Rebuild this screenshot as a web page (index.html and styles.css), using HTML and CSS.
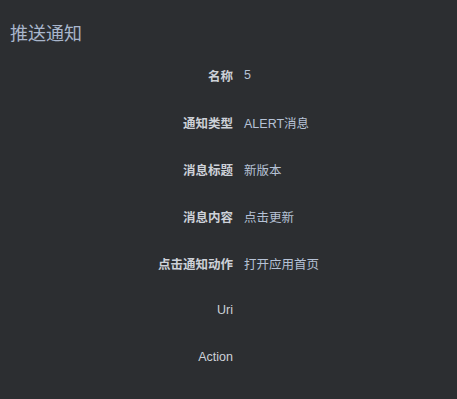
FILE: index.html
```html
<!DOCTYPE html>
<html lang="zh">
<head>
<meta charset="utf-8">
<title>推送通知</title>
<link rel="stylesheet" href="styles.css">
</head>
<body>
<div class="page">
  <h1 class="title">推送通知</h1>
  <div class="form">
    <div class="label">名称</div><div class="value">5</div>
    <div class="label">通知类型</div><div class="value">ALERT消息</div>
    <div class="label">消息标题</div><div class="value">新版本</div>
    <div class="label">消息内容</div><div class="value">点击更新</div>
    <div class="label">点击通知动作</div><div class="value">打开应用首页</div>
    <div class="label latin">Uri</div><div class="value"></div>
    <div class="label latin">Action</div><div class="value"></div>
  </div>
</div>
</body>
</html>
```
FILE: styles.css
```css
html, body {
  margin: 0;
  padding: 0;
  background: #2c2e31;
  height: 100%;
}
body {
  font-family: "Liberation Sans", "Noto Sans CJK SC", sans-serif;
  color: #cfd3d9;
}
.page {
  padding: 22px 0 0 10px;
}
.title {
  margin: 0;
  height: 30px;
  font-size: 18px;
  line-height: 24px;
  font-weight: 400;
  color: #a9b6cc;
}
.form {
  display: grid;
  grid-template-columns: 223px 1fr;
  grid-auto-rows: 46.9px;
  column-gap: 11px;
  align-items: center;
  font-size: 12.5px;
}
.label {
  text-align: right;
  font-weight: 700;
  color: #cdd1d8;
}
.label.latin {
  font-weight: 400;
}
.value {
  color: #b6c2d6;
}
```
